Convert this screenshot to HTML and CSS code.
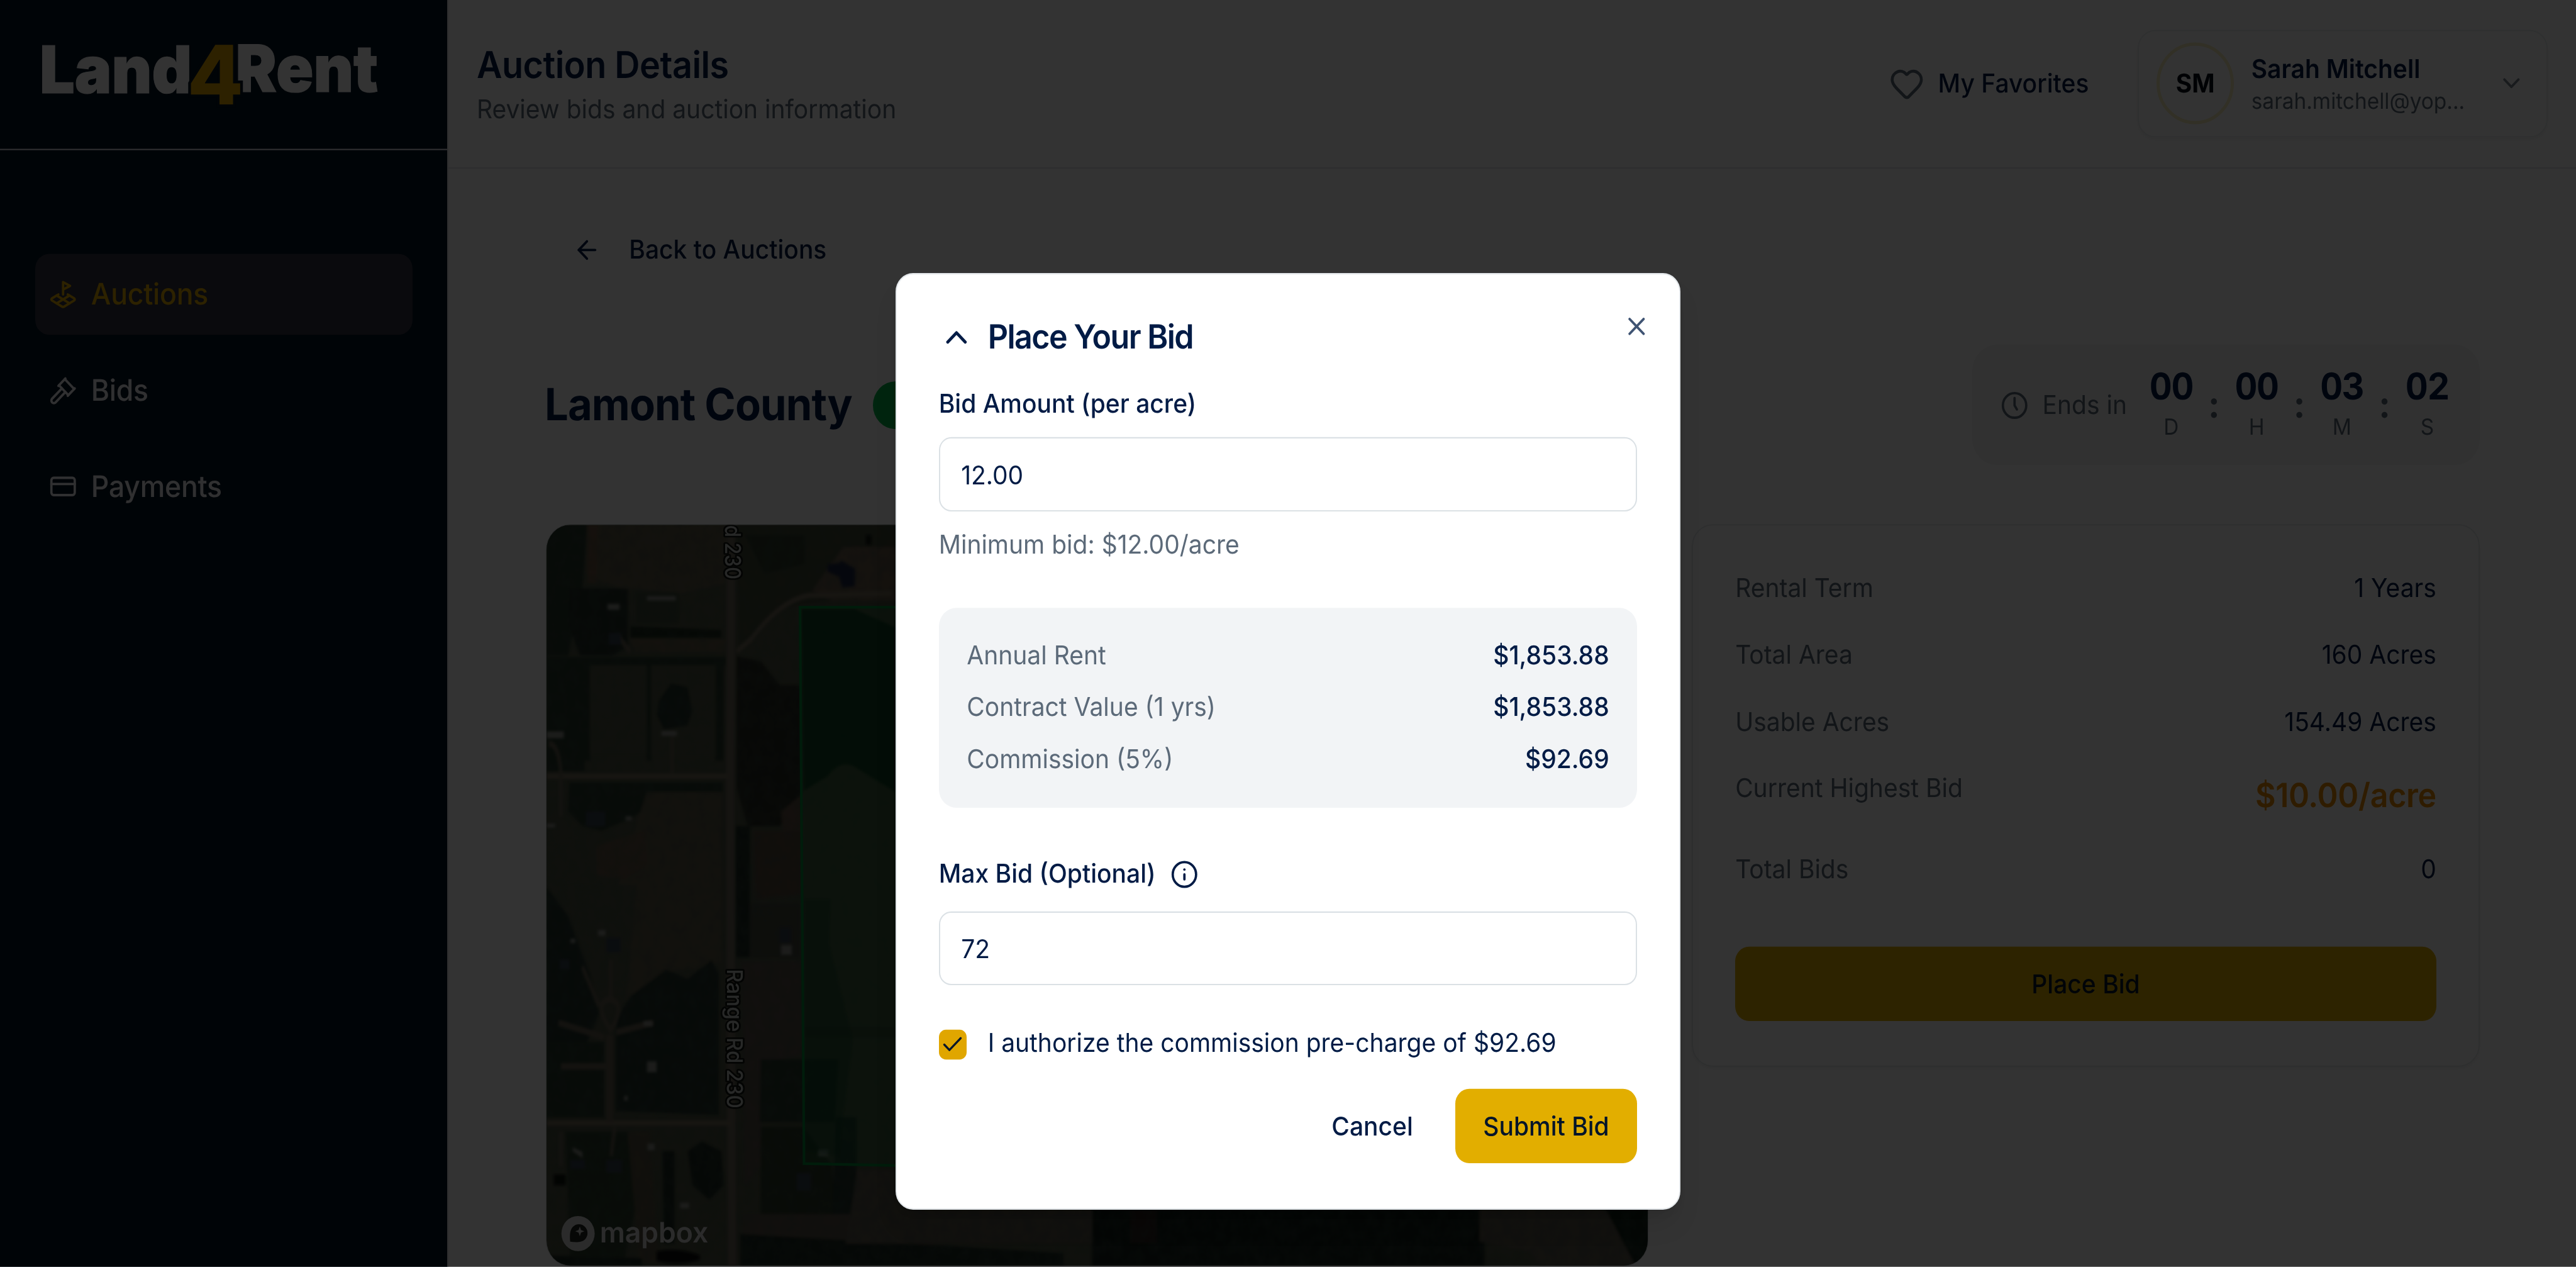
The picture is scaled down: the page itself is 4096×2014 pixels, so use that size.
FILE: index.html
```html
<!DOCTYPE html>
<html lang="en">
<head>
<meta charset="utf-8">
<title>Land4Rent - Auction Details</title>
<link rel="stylesheet" href="styles.css">
</head>
<body>
<div class="app">
  <aside class="sidebar">
    <div class="brand">
      <svg class="brand-logo" viewBox="0 0 255 80" aria-label="Land4Rent">
        <text class="brand-word" x="22.6" y="50.3" font-size="35.4">Land</text>
        <text class="brand-word" x="134.4" y="49.7" font-size="35.2">Rent</text>
        <text class="brand-four" transform="translate(106.9 56.3) scale(1.05 1)" font-size="44.3">4</text>
      </svg>
    </div>
    <nav class="nav">
      <a class="nav-item nav-item--active">
        <svg class="icon" viewBox="0 0 24 24"><path d="m12 8 6-3-6-3v10"/><path d="m8 11.99-5.5 3.14a1 1 0 0 0 0 1.74l8.5 4.86a2 2 0 0 0 2 0l8.5-4.86a1 1 0 0 0 0-1.74L16 12"/><path d="m6.49 12.85 11.02 6.3"/><path d="M17.51 12.85 6.5 19.15"/></svg>
        <span>Auctions</span>
      </a>
      <a class="nav-item">
        <svg class="icon" viewBox="0 0 24 24"><path d="m14 13-8.381 8.38a1 1 0 0 1-3.001-3l8.384-8.381"/><path d="m16 16 6-6"/><path d="m21.5 10.5-8-8"/><path d="m8 8 6-6"/><path d="m8.5 7.5 8 8"/></svg>
        <span>Bids</span>
      </a>
      <a class="nav-item">
        <svg class="icon" viewBox="0 0 24 24"><rect x="2" y="5" width="20" height="14" rx="2"/><path d="M2 10h20"/></svg>
        <span>Payments</span>
      </a>
    </nav>
  </aside>

  <div class="page">
    <header class="header">
      <div class="heading">
        <h1 class="heading-title">Auction Details</h1>
        <p class="heading-sub">Review bids and auction information</p>
      </div>
      <div class="header-actions">
        <a class="favorites">
          <svg class="icon icon--lg icon--muted" viewBox="0 0 24 24"><path d="M2 9.5a5.5 5.5 0 0 1 9.591-3.676.56.56 0 0 0 .818 0A5.49 5.49 0 0 1 22 9.5c0 2.29-1.5 4-3 5.5l-5.492 5.313a2 2 0 0 1-3 .019L5 15c-1.5-1.5-3-3.2-3-5.5"/></svg>
          <span>My Favorites</span>
        </a>
        <div class="user">
          <div class="avatar">SM</div>
          <div class="user-text">
            <div class="user-name">Sarah Mitchell</div>
            <div class="user-mail">sarah.mitchell@yop...</div>
          </div>
          <svg class="icon icon--muted user-chevron" viewBox="0 0 24 24"><path d="m6 9 6 6 6-6"/></svg>
        </div>
      </div>
    </header>

    <main class="main">
      <a class="back">
        <svg class="icon" viewBox="0 0 24 24"><path d="m12 19-7-7 7-7"/><path d="M19 12H5"/></svg>
        <span>Back to Auctions</span>
      </a>

      <section class="title-row">
        <h2 class="county">Lamont County</h2>
        <span class="pill"></span>
        <div class="timer">
          <svg class="icon icon--muted" viewBox="0 0 24 24"><circle cx="12" cy="12" r="10"/><path d="M12 6v6l2 3.2"/></svg>
          <span class="timer-label">Ends in</span>
          <div class="clock">
            <div class="unit"><b>00</b><span>D</span></div><i class="colon">:</i>
            <div class="unit"><b>00</b><span>H</span></div><i class="colon">:</i>
            <div class="unit"><b>03</b><span>M</span></div><i class="colon">:</i>
            <div class="unit"><b>02</b><span>S</span></div>
          </div>
        </div>
      </section>

      <section class="columns">
        <div class="map">
          <svg class="map-ground" viewBox="50 39 4601 1527" preserveAspectRatio="none">
            <defs>
              <filter id="soft" x="-5%" y="-5%" width="110%" height="110%"><feGaussianBlur stdDeviation="5 2.6"/></filter>
              <filter id="grain" x="0" y="0" width="100%" height="100%">
                <feTurbulence type="fractalNoise" baseFrequency="0.022 0.035" numOctaves="4" seed="8"/>
                <feColorMatrix values="0 0 0 0 .04  0 0 0 0 .07  0 0 0 0 .05  1.6 0 0 0 -.55"/>
              </filter>
            </defs>
            <rect x="50" y="39" width="4601" height="1527" fill="#4c5140"/>
            <g filter="url(#soft)">
              <path fill="#26382c" d="M50 39h170l-20 130-60 140H50z"/>
              <path fill="#5d5744" d="M240 39h560v120l-180 20-250-10-130-20z"/>
              <path fill="#6a5240" d="M222 39h45l-8 120h-38z"/>
              <path fill="#202f27" d="M145 170h245v120l-60 18H190l-45-60z"/>
              <path fill="#3e4a38" d="M425 178h180v65H425z"/>
              <path fill="#1d2b1f" d="M400 248l380 8v16H400z"/>
              <path fill="#605844" d="M400 275h400v26H420z"/>
              <path fill="#27382a" d="M50 312h160v235H50zM210 312h590v16H210zM210 320h22v205h-22zM468 320h20v205h-20zM755 320h35v205h-35z"/>
              <path fill="#4d523f" d="M232 330h236v180H232zM488 330h268v185H488z"/>
              <path fill="#223129" d="M520 400l50-35 70 8 20 50-20 30-100 8-30-30z"/>
              <path fill="#28382b" d="M145 570h640v22H560l-150 50-130 28-80-10-60-30z"/>
              <path fill="#5c5643" d="M470 590h310v350l-90 10-140 10-170 60 40-190-80-40z"/>
              <path fill="#61513f" d="M260 700l200-30 10 70-100 30-110-10z"/>
              <path fill="#4b5140" d="M130 785l300-5-20 80-100 40-130-30z"/>
              <path fill="#22332a" d="M50 785l90 60 90 120 40 80-50 60H50z"/>
              <path fill="#21322a" d="M340 1060l60-50 150-55 90 20 100-40 30 30v290l-430-8z"/>
              <path fill="#26382a" d="M50 1105h240v155H50z"/>
              <path fill="#2b3b2b" d="M130 1290h310l-10 140-60 136H150z"/>
              <path fill="#57503d" d="M390 1290h90l40 270H440z"/>
              <path fill="#1d2a20" d="M640 1330l60-20 80 20 10 70-60 30-70-30zM50 1545l400 5v16H50zM535 1330h50v190h-45z"/>
              <path fill="#404635" d="M845 39h660v150h-170l-300 20-180 80z"/>
              <path fill="#2d3a2c" d="M880 60h250v60l-170 20z"/>
              <path fill="#675a48" d="M1290 85h250v110h-300l-80-20z"/>
              <path fill="#272b24" d="M845 310l100 10 80 50h90v240l-90 50H890l-45-80z"/>
              <path fill="#604e3f" d="M1030 630l90-35v120l-70-10z"/>
              <path fill="#54463a" d="M915 670h200v130l-190 10z"/>
              <path fill="#1c2a20" d="M840 660h60v270h-60z"/>
              <path fill="#43453a" d="M900 820h210v110H905z"/>
              <path fill="#544c45" d="M870 940h240v190l-160 20-10 210-60 40z"/>
              <path fill="#26372a" d="M945 1140h325l-15 130H940z"/>
              <path fill="#293927" d="M945 1280h180l120 80 15 100H945z"/>
              <path fill="#223029" d="M1260 1260h85v120l-20 80h-80z"/>
              <path fill="#544d43" d="M870 1460h800v106H870z"/>
              <path fill="#1e2a22" d="M860 1500l700 20 650 20v26H860z"/>
              <path fill="#5a5448" d="M1350 1370h1010v150H1300z"/>
              <path fill="#18241c" d="M2330 1380h1640v186H2330z"/>
              <path fill="#2f2822" d="M2490 1400h110v120h-110z"/>
              <path fill="#5a5448" d="M3950 1380h450l110 100 120 86H4200l-40-30-210-20z"/>
              <path fill="#18261d" d="M4400 1380h260v186h-60z"/>
            </g>
            <rect x="50" y="39" width="4601" height="1527" filter="url(#grain)" opacity=".4"/>
            <g filter="url(#soft)" fill="none" stroke="#736a58">
              <path stroke="#6c6457" stroke-width="34" d="M820 39v280l-3 250 3 400 2 300 4 297"/>
              <path stroke-width="11" d="M50 557h760M50 1272h770M845 300l60-25q120-80 240-90l350-5"/>
              <path stroke="#645c4d" stroke-width="28" d="M314 1270V1090"/>
              <path stroke="#645c4d" stroke-width="13" d="M280 1028q34-22 68 0 10 22-30 52-44-30-38-52zM270 1030l-70-80M318 1012v-76M290 1095l-190-30M340 1085l155-20M110 1155h190"/>
              <path stroke="#645c4d" stroke-width="13" d="M575 550v-85M60 490q40 0 50 60v90M400 300l-50-30M335 1280l-15 60M110 1290v70"/>
              <path stroke="#3c4235" stroke-width="22" d="M1130 1085h380"/>
            </g>
            <g filter="url(#soft)" fill="#8a8c85">
              <path d="M305 202h50v12h-50zM470 186h120v9H470zM50 465h72v14H50zM530 464h65v10h-65zM265 874h32v12h-32zM150 892h20v9h-20zM470 1145h40v22h-40zM472 1314h30v14h-30zM608 1436h38v12h-38zM1030 905h45v20h-45zM455 1062h38v10h-38zM1185 1326h42v14h-42zM380 640h26v8h-26zM50 655h36v8H50zM375 1216h14v10h-14zM160 1322l40 10v12l-40-14z"/>
              <path fill="#35404d" d="M310 262h50v24h-50zM215 630h80v30h-80zM300 890h60v30h-60zM105 935h40v20h-40zM300 1348h65v26h-65zM150 1348h60v18h-60zM1025 870h45v30h-45zM1095 1375h60v36h-60z"/>
              <path fill="#1b2740" d="M1225 120l50-2 5-6 60 18-2 36-52 2-14-22-48-10z"/>
              <path fill="#0d130f" d="M1385 60h22v20h-22zM80 1378h50v22H80z"/>
              <path fill="#070b08" d="M510 1536q90-8 180 8v10q-90 14-180 2z"/>
            </g>
            <path fill="#009a3c" fill-opacity=".16" d="M1109 208h500v1156l-483-8z"/>
            <path filter="url(#soft)" fill="#063a1c" fill-opacity=".75" d="M1115 212h220l180 40v340l-180-55q-60-15-110 20l-100 30z"/>
            <path filter="url(#soft)" fill="#063a1c" fill-opacity=".3" d="M1125 810h115l-10 90 100 200-60 240-140-10z"/>
          </svg>
          <svg class="map-labels" viewBox="0 0 628.5 400">
            <path class="parcel" d="M500 44.3H144.7L147 345l353 7"/>
            <g class="road-label">
              <text transform="translate(101.8 29.3) rotate(90)" text-anchor="end" textLength="29.3" lengthAdjust="spacingAndGlyphs">d 230</text>
              <text transform="translate(102.9 239.8) rotate(90)" textLength="75.4" lengthAdjust="spacingAndGlyphs">Range Rd 230</text>
            </g>
            <g class="attribution">
              <circle cx="18" cy="382.8" r="9.5"/>
              <path class="attribution-pin" d="M13.5 387.2c-.3-3.600-.2-6.200 1.500-8a4.900 4.900 0 0 1 7 0 4.700 4.700 0 0 1 0 6.700c-1.900 1.800-5 1.700-8.500 1.300z"/>
              <path d="M19 379l.7 1.900 1.900.7-1.900.7-.7 1.900-.7-1.900-1.900-.7 1.900-.7z"/>
              <text x="30.4" y="387.6" textLength="62" lengthAdjust="spacingAndGlyphs">mapbox</text>
            </g>
          </svg>
        </div>

        <div class="card">
          <dl class="facts">
            <div class="fact"><dt>Rental Term</dt><dd>1 Years</dd></div>
            <div class="fact"><dt>Total Area</dt><dd>160 Acres</dd></div>
            <div class="fact"><dt>Usable Acres</dt><dd>154.49 Acres</dd></div>
            <div class="fact"><dt>Current Highest Bid</dt><dd class="fact-bid">$10.00/acre</dd></div>
            <div class="fact"><dt>Total Bids</dt><dd>0</dd></div>
          </dl>
          <button class="btn btn--primary btn--block">Place Bid</button>
        </div>
      </section>
    </main>
  </div>

  <div class="overlay">
    <div class="modal" role="dialog" aria-label="Place Your Bid">
      <svg class="icon modal-close" viewBox="0 0 24 24"><path d="M18 6 6 18"/><path d="m6 6 12 12"/></svg>
      <div class="modal-head">
        <svg class="icon icon--lg" viewBox="0 0 24 24"><path d="m18 15-6-6-6 6"/></svg>
        <h3 class="modal-title">Place Your Bid</h3>
      </div>
      <div class="field">
        <label class="label" for="bid">Bid Amount (per acre)</label>
        <input class="input" id="bid" value="12.00">
        <p class="hint">Minimum bid: $12.00/acre</p>
      </div>
      <div class="summary">
        <div class="summary-row"><span>Annual Rent</span><b>$1,853.88</b></div>
        <div class="summary-row"><span>Contract Value (1 yrs)</span><b>$1,853.88</b></div>
        <div class="summary-row"><span>Commission (5%)</span><b>$92.69</b></div>
      </div>
      <div class="field">
        <label class="label label--info" for="max">Max Bid (Optional)
          <svg class="icon" viewBox="0 0 24 24"><circle cx="12" cy="12" r="10"/><path d="M12 16v-4"/><path d="M12 8h.01"/></svg>
        </label>
        <input class="input" id="max" value="72">
      </div>
      <div class="consent">
        <span class="checkbox"><svg class="checkmark" viewBox="0 0 24 24"><path d="M20 6 9 17l-5-5"/></svg></span>
        <span>I authorize the commission pre-charge of $92.69</span>
      </div>
      <div class="modal-foot">
        <button class="btn btn--ghost">Cancel</button>
        <button class="btn btn--primary">Submit Bid</button>
      </div>
    </div>
  </div>
</div>
</body>
</html>
```
FILE: styles.css
```css
:root {
  --navy: #001b45;
  --muted: #5c6a79;
  --line: #dbe1e5;
  --gold: #e2ae00;
  --gold-ink: #00142a;
  --side: #001423;
}

* { box-sizing: border-box; margin: 0; padding: 0; }

/* 1rem = 10 layout pixels on a 1470 pixel wide screen */
html { font-size: calc(100vw / 147); }

body {
  font-family: Inter, "Liberation Sans", sans-serif;
  text-rendering: geometricPrecision;
  background: #333;
  overflow: hidden;
  height: 100vh;
}

button, input { font: inherit; color: inherit; border: 0; background: none; letter-spacing: inherit; }

.app {
  position: relative;
  display: flex;
  width: 147rem;
  height: 68.45rem;
  font-size: 1.4rem;
  line-height: 2rem;
  color: var(--navy);
  background: #fff;
  overflow: hidden;
  transform: scaleY(1.056);
  transform-origin: 0 0;
}

.icon {
  flex: none;
  width: 1.6rem;
  height: 1.6rem;
  fill: none;
  stroke: currentColor;
  stroke-width: 2;
  stroke-linecap: round;
  stroke-linejoin: round;
}
.icon--lg { width: 2rem; height: 2rem; }
.icon--muted { color: var(--muted); }

/* Sidebar */
.sidebar {
  flex: none;
  width: 25.6rem;
  background: var(--side);
  border-right: .1rem solid #e5e7eb;
}
.brand { height: 8.1rem; border-bottom: .1rem solid #f0f0f4; }
.brand-logo { display: block; width: 25.5rem; height: 8rem; }
.brand-word { font-weight: 900; fill: #fff; stroke: #fff; stroke-width: .4; }
.brand-four {
  font-weight: 800;
  fill: #e2a400;
  stroke: var(--side);
  stroke-width: 3;
  paint-order: stroke;
}
.nav { display: flex; flex-direction: column; gap: .8rem; padding: 5.6rem 2rem 0; }
.nav-item {
  display: flex;
  align-items: center;
  gap: .8rem;
  height: 4.4rem;
  padding: 0 .8rem;
  border-radius: .8rem;
  font-size: 1.6rem;
  font-weight: 500;
  letter-spacing: -.01rem;
  color: #f1f1f3;
}
.nav-item--active { background: #323242; color: #e2a800; }

/* Header */
.page { flex: 1; display: flex; flex-direction: column; min-width: 0; }
.header {
  flex: none;
  display: flex;
  align-items: center;
  justify-content: space-between;
  height: 9.1rem;
  padding: 0 1.6rem;
  border-bottom: .1rem solid #e0e4e8;
}
.heading-title { font-size: 2rem; line-height: 2.8rem; font-weight: 600; letter-spacing: -.018rem; }
.heading-sub { color: var(--muted); }
.header-actions { display: flex; align-items: center; gap: 2.8rem; }
.favorites { display: flex; align-items: center; gap: .8rem; font-weight: 500; }
.user {
  display: flex;
  align-items: center;
  gap: 1rem;
  width: 23.4rem;
  height: 5.8rem;
  padding: 0 1.2rem 0 1rem;
  border: .1rem solid #ebeef0;
  border-radius: 1rem;
  box-shadow: 0 .1rem .2rem rgba(0, 0, 0, .06);
}
.avatar {
  flex: none;
  display: grid;
  place-items: center;
  width: 4.4rem;
  height: 4.4rem;
  border: .2rem solid rgba(226, 190, 0, .26);
  border-radius: 50%;
  font-weight: 700;
  color: #000c18;
}
.user-text { flex: 1; }
.user-name { font-weight: 600; }
.user-mail { font-size: 1.2rem; line-height: 1.6rem; color: var(--muted); }
.user-chevron { opacity: .8; }

/* Content */
.main { padding: 3.4rem 5.5rem 0 5.55rem; }
.back {
  display: flex;
  align-items: center;
  gap: 1.6rem;
  height: 2rem;
  padding-left: 1.55rem;
  font-weight: 500;
}
.title-row { display: flex; align-items: center; height: 6.5rem; margin-top: 4.14rem; }
.county { font-size: 2.4rem; line-height: 3.2rem; font-weight: 700; letter-spacing: -.032rem; margin-left: -.07rem; }
.pill { width: 8rem; height: 2.58rem; margin-left: 1.2rem; border-radius: 2rem; background: #00b84a; }
.timer {
  display: flex;
  align-items: center;
  gap: .8rem;
  width: 28.95rem;
  height: 6.5rem;
  margin-left: auto;
  padding: 0 1.6rem;
  border-radius: 1.4rem;
  background: #f3f4f6;
}
.timer-label { color: var(--muted); }
.clock { display: flex; align-items: center; margin-left: .4rem; }
.unit { display: flex; flex-direction: column; align-items: center; gap: .4rem; width: 2.66rem; }
.unit b { font-size: 2rem; line-height: 2rem; font-weight: 700; letter-spacing: -.05rem; font-variant-numeric: tabular-nums; }
.unit span { font-size: 1.2rem; line-height: 1.6rem; color: var(--muted); }
.colon { width: 2.21rem; text-align: center; font-size: 2rem; font-weight: 700; font-style: normal; color: var(--muted); }

.columns { display: flex; align-items: flex-start; justify-content: space-between; margin-top: 3.18rem; }
.map {
  position: relative;
  width: 62.9rem;
  height: 40.1rem;
  border: .05rem solid #cfd4d8;
  border-radius: 1.4rem;
  overflow: hidden;
}
.map-ground, .map-labels { position: absolute; inset: 0; width: 100%; height: 100%; }
.parcel { fill: none; stroke: #008a39; stroke-width: 1.5; }
.road-label { font-size: 12.4px; font-weight: 500; fill: #c4c5c3; stroke: #121512; stroke-width: 2; paint-order: stroke; stroke-linejoin: round; }
.attribution { font-size: 15.2px; font-weight: 600; fill: #d6d6d6; }
.attribution-pin { fill: #22261f; }

.card {
  width: 44.95rem;
  padding: 2.4rem;
  border: .1rem solid #e6e9ec;
  border-radius: 1.2rem;
  box-shadow: 0 .1rem .2rem rgba(0, 0, 0, .06);
}
.facts { display: flex; flex-direction: column; gap: 1.6rem; }
.fact { display: flex; justify-content: space-between; }
.fact dt { color: var(--muted); }
.fact-bid { font-size: 1.8rem; line-height: 2.8rem; font-weight: 600; letter-spacing: -.012rem; color: #ec8b00; }

.btn {
  height: 4rem;
  padding: 0 1.6rem;
  border-radius: .8rem;
  font-weight: 500;
  line-height: 2rem;
}
.btn--primary { background: var(--gold); color: var(--gold-ink); }
.btn--block { display: block; width: 100%; margin-top: 3.16rem; }

/* Dialog */
.overlay { position: absolute; inset: 0; background: rgba(0, 0, 0, .8); }
.modal {
  position: absolute;
  left: 51.1rem;
  top: 14.75rem;
  width: 44.8rem;
  height: 50.6rem;
  padding: 2.41rem 2.4rem 2.4rem;
  border: .1rem solid #e3e7ea;
  border-radius: 1rem;
  background: #fff;
  box-shadow: 0 1rem 1.5rem -.3rem rgba(0, 0, 0, .1), 0 .4rem .6rem -.4rem rgba(0, 0, 0, .1);
}
.modal-close { position: absolute; top: 2.01rem; right: 1.62rem; opacity: .75; }
.modal-head { display: flex; align-items: center; gap: .8rem; height: 2rem; }
.modal-title { font-size: 1.8rem; line-height: 2rem; font-weight: 600; letter-spacing: -.055rem; }
.field { display: flex; flex-direction: column; gap: .8rem; }
.modal-head + .field { margin-top: 1.6rem; }
.label { display: flex; align-items: center; font-weight: 500; }
.label--info { gap: .85rem; height: 2.4rem; }
.input {
  width: 100%;
  height: 4rem;
  padding: 0 1.2rem;
  border: .1rem solid var(--line);
  border-radius: .7rem;
  outline: 0;
}
.hint { color: var(--muted); }
.summary {
  display: flex;
  flex-direction: column;
  gap: .8rem;
  margin: 2.4rem 0;
  padding: 1.6rem;
  border-radius: 1rem;
  background: #f2f4f6;
}
.summary-row { display: flex; justify-content: space-between; }
.summary-row span { color: var(--muted); }
.summary-row b { font-weight: 500; }
.consent { display: flex; align-items: flex-start; gap: 1.2rem; height: 1.6rem; margin-top: 2.4rem; line-height: 1.4rem; }
.checkbox {
  display: grid;
  place-items: center;
  width: 1.6rem;
  height: 1.6rem;
  border-radius: .4rem;
  background: #e0a600;
}
.checkmark { width: 1.4rem; height: 1.4rem; fill: none; stroke: var(--gold-ink); stroke-width: 2; stroke-linecap: round; stroke-linejoin: round; }
.modal-foot { display: flex; justify-content: flex-end; gap: .8rem; margin-top: 1.6rem; }
```
